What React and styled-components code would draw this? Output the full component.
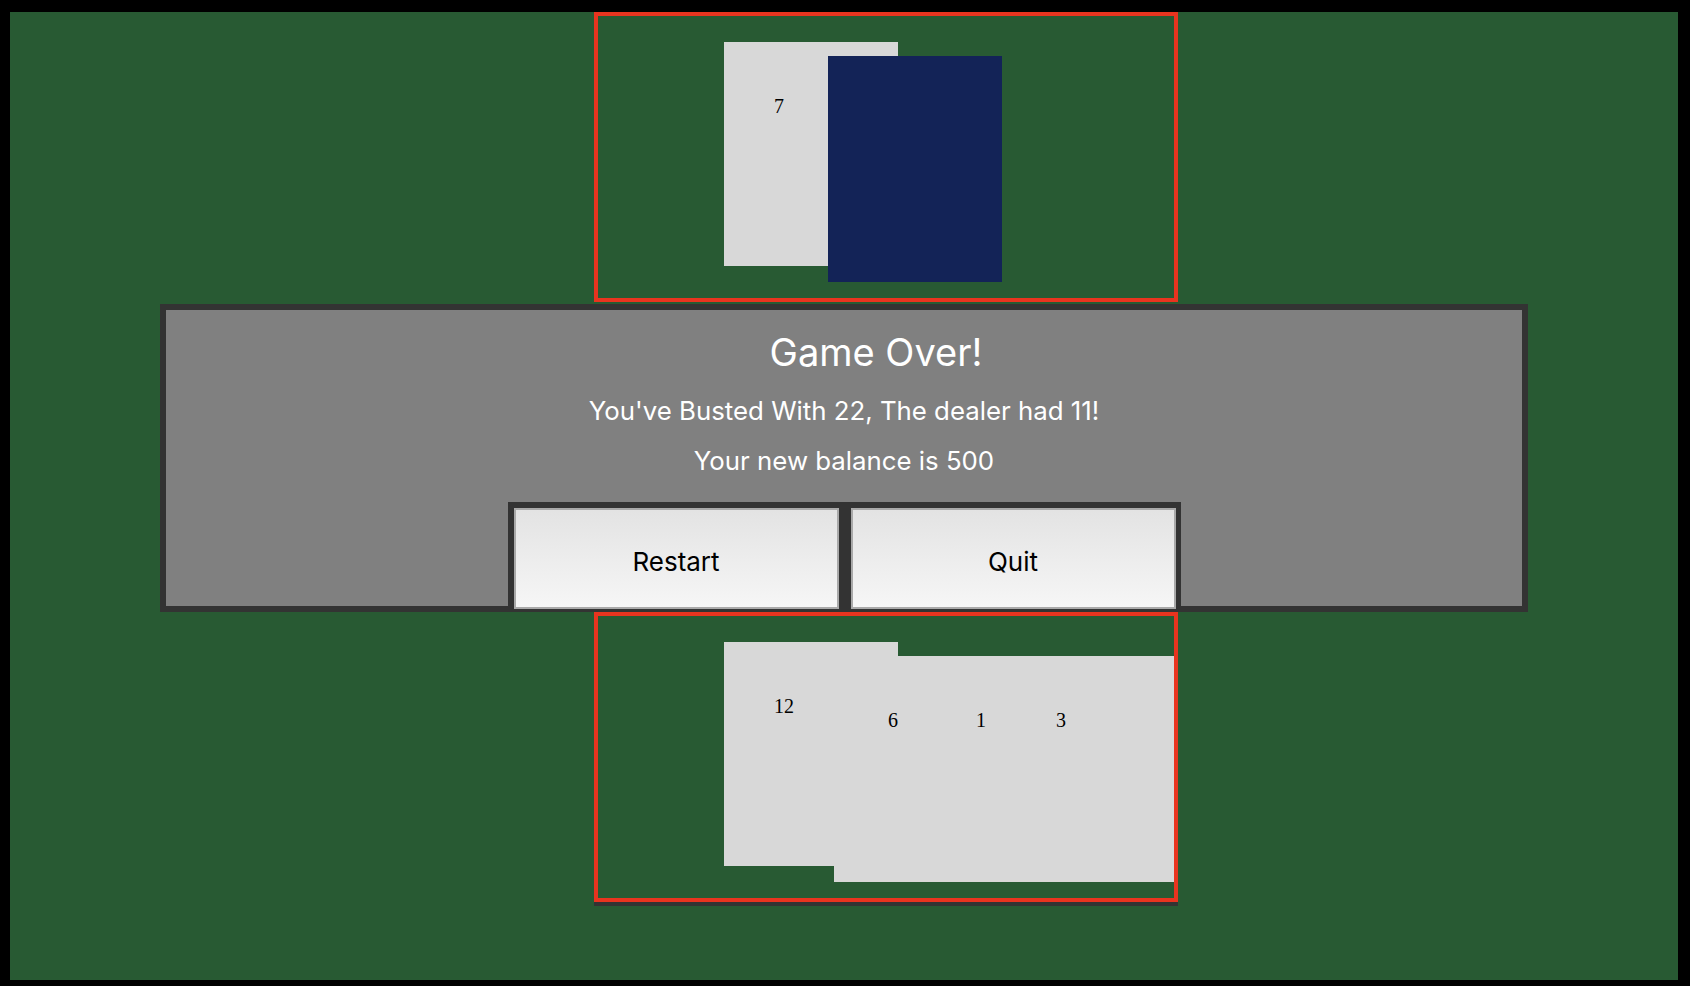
import React from 'react'
import styled, { createGlobalStyle } from 'styled-components'

const GlobalStyle = createGlobalStyle`
    html {
        overflow: hidden;
        background: #000;
    }

    body {
        margin: 0;
        background: #000;
    }
`

const StyledTable = styled.main`
    position: relative;
    display: flex;
    align-items: flex-start;
    height: 968px;
    margin: 12px 12px 0 10px;
    padding-left: 578px;
    background: #285a33;
`

const StyledColumn = styled.section`
    display: flex;
    flex-direction: column;
    flex-shrink: 0;
    width: 597px;
    height: 972px;
    padding-left: 6px;
    box-sizing: border-box;
    background: #285a33;
`

const StyledHand = styled.div`
    display: flex;
    align-items: flex-start;
    width: 584px;
    height: 290px;
    padding: 26px 0 0 126px;
    box-sizing: border-box;
    border: 4px solid #e8341f;
    overflow: hidden;
    box-shadow: ${(props) => (props.$shadow ? '0 4px 0 #333' : 'none')};
`

const StyledFelt = styled.div`
    height: 310px;
`

const StyledCard = styled.div`
    flex-shrink: 0;
    width: 174px;
    height: ${(props) => (props.$raised ? '226px' : '224px')};
    margin-left: ${(props) => props.$shift || 0}px;
    margin-top: ${(props) => (props.$raised ? '14px' : '0')};
    padding: 54px 0 0 ${(props) => (props.$raised ? '54px' : '50px')};
    box-sizing: border-box;
    background: ${(props) => (props.$hidden ? '#132357' : '#d8d8d8')};
    color: #000;
    font-family: 'Liberation Serif', serif;
    font-size: 20px;
    line-height: 20px;
`

const StyledModal = styled.div`
    position: absolute;
    top: 292px;
    left: 150px;
    width: 1368px;
    height: 308px;
    padding-top: 19px;
    box-sizing: border-box;
    border: 6px solid #333;
    background: #808080;
    color: #fff;
    text-align: center;
    font-family: Inter, 'Noto Sans', sans-serif;
`

const StyledTitle = styled.h1`
    margin: 0;
    padding-left: 64px;
    font-size: 38px;
    font-weight: 400;
    line-height: 46px;
`

const StyledMessage = styled.p`
    margin: ${(props) => props.$gap}px 0 0;
    font-size: 25.8px;
    line-height: 30px;
`

const StyledButtons = styled.div`
    display: flex;
    gap: 12px;
    width: 673px;
    margin: 26px auto 0;
    padding: 6px 5px 2px 6px;
    box-sizing: border-box;
    background: #333;
`

const StyledButton = styled.button`
    flex: 1;
    height: 101px;
    padding: 6px 0 0;
    border: 2px solid #a9a9a9;
    background: linear-gradient(#e3e3e3, #f6f6f6);
    color: #000;
    font-family: Inter, 'Noto Sans', sans-serif;
    font-size: 26px;
    cursor: pointer;
`

const dealerCards = [
    { value: 7 },
    { hidden: true, shift: -70, raised: true },
]

const playerCards = [
    { value: 12 },
    { value: 6, shift: -64, raised: true },
    { value: 1, shift: -86, raised: true },
    { value: 3, shift: -94, raised: true },
]

function Hand({ cards, shadow }) {
    return (
        <StyledHand $shadow={shadow}>
            {cards.map((card, i) => (
                <StyledCard
                    key={i}
                    $hidden={card.hidden}
                    $raised={card.raised}
                    $shift={card.shift}
                >
                    {card.hidden ? null : card.value}
                </StyledCard>
            ))}
        </StyledHand>
    )
}

export default function App() {
    return (
        <>
            <GlobalStyle />
            <StyledTable>
                <StyledColumn>
                    <Hand cards={dealerCards} />
                    <StyledFelt />
                    <Hand cards={playerCards} shadow />
                </StyledColumn>
                <StyledModal>
                    <StyledTitle>Game Over!</StyledTitle>
                    <StyledMessage $gap={21}>
                        You've Busted With 22, The dealer had 11!
                    </StyledMessage>
                    <StyledMessage $gap={20}>Your new balance is 500</StyledMessage>
                    <StyledButtons>
                        <StyledButton>Restart</StyledButton>
                        <StyledButton>Quit</StyledButton>
                    </StyledButtons>
                </StyledModal>
            </StyledTable>
        </>
    )
}
